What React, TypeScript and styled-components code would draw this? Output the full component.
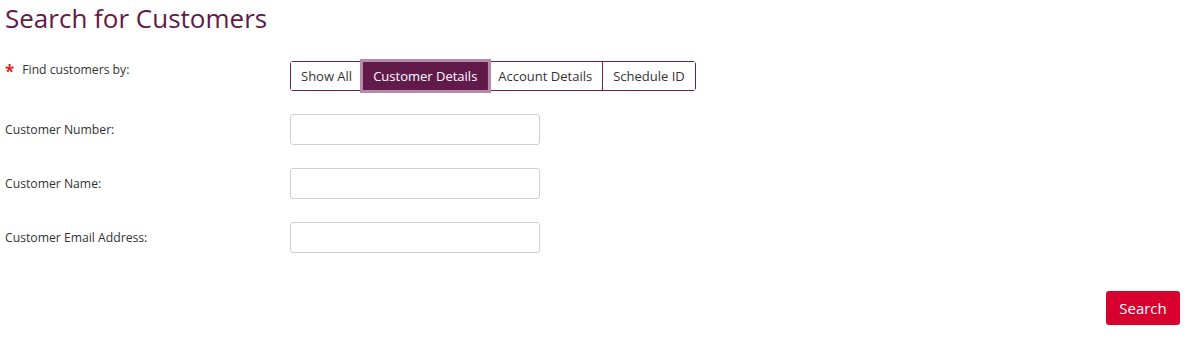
import React, { useState } from 'react';
import styled, { createGlobalStyle } from 'styled-components';

const GlobalStyle = createGlobalStyle`
  body {
    margin: 0;
    background: #fff;
    font-family: "Open Sans", "Liberation Sans", sans-serif;
    color: #333;
  }
`;

const Page = styled.div`
  padding: 0 11px 0 5px;
`;

const Title = styled.h1`
  margin: 0;
  padding-top: 2px;
  font-size: 26px;
  font-weight: 400;
  color: #5f1b48;
  line-height: 32px;
`;

const Form = styled.form`
  display: flex;
  flex-direction: column;
  margin-top: 27px;
`;

const Row = styled.div<{ $gap?: number }>`
  display: grid;
  grid-template-columns: 285px 1fr;
  align-items: center;
  margin-bottom: ${p => p.$gap ?? 23}px;
`;

const Label = styled.label<{ $top?: boolean }>`
  font-size: 12.2px;
  color: #333;
  align-self: ${p => (p.$top ? 'start' : 'center')};
  display: flex;
  align-items: center;
  gap: 8px;
`;

const Required = styled.span`
  color: #e0231c;
  font-size: 17px;
  font-weight: 700;
  line-height: 12px;
  padding-top: 5px;
`;

const Group = styled.div`
  display: inline-flex;
  justify-self: start;
  border: 1px solid #6b1f52;
  border-radius: 3px;
  height: 28px;
`;

const GroupButton = styled.button<{ $active?: boolean; $last?: boolean }>`
  font-family: inherit;
  font-size: 13px;
  padding: 0 10px;
  border: none;
  border-right: ${p => (p.$last ? 'none' : '1px solid #6b1f52')};
  background: ${p => (p.$active ? '#621a4b' : '#fff')};
  color: ${p => (p.$active ? '#fff' : '#333')};
  box-shadow: ${p => (p.$active ? '0 0 0 3px #b58aa7' : 'none')};
  position: relative;
  z-index: ${p => (p.$active ? 1 : 0)};
  cursor: pointer;
`;

const Input = styled.input`
  width: 250px;
  height: 31px;
  box-sizing: border-box;
  border: 1px solid #ccd0d6;
  border-radius: 3px;
  padding: 0 8px;
  font-family: inherit;
  font-size: 13px;
`;

const Actions = styled.div`
  display: flex;
  justify-content: flex-end;
  margin-top: 15px;
`;

const SearchButton = styled.button`
  background: #d8002e;
  color: #fff;
  border: none;
  border-radius: 3px;
  height: 34px;
  width: 74px;
  font-family: inherit;
  font-size: 15px;
  cursor: pointer;
`;

const modes = ['Show All', 'Customer Details', 'Account Details', 'Schedule ID'];
const fields = ['Customer Number:', 'Customer Name:', 'Customer Email Address:'];

const App = () => {
  const [mode, setMode] = useState('Customer Details');
  return (
    <Page>
      <GlobalStyle />
      <Title>Search for Customers</Title>
      <Form onSubmit={e => e.preventDefault()}>
        <Row $gap={23}>
          <Label $top>
            <Required>*</Required>Find customers by:
          </Label>
          <Group>
            {modes.map((m, i) => (
              <GroupButton
                key={m}
                type="button"
                $active={m === mode}
                $last={i === modes.length - 1}
                onClick={() => setMode(m)}
              >
                {m}
              </GroupButton>
            ))}
          </Group>
        </Row>
        {fields.map(f => (
          <Row key={f}>
            <Label>{f}</Label>
            <Input type="text" />
          </Row>
        ))}
        <Actions>
          <SearchButton type="submit">Search</SearchButton>
        </Actions>
      </Form>
    </Page>
  );
};

export default App;
